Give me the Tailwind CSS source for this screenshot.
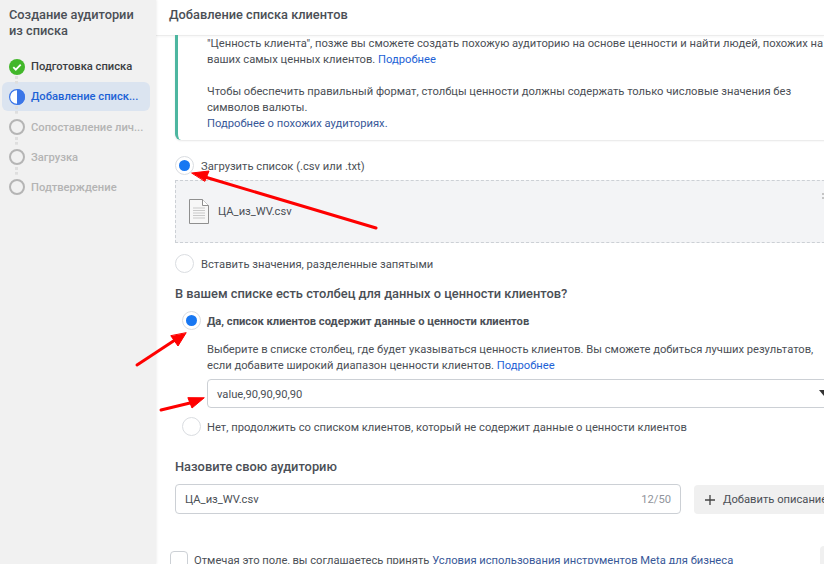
<!DOCTYPE html>
<html lang="ru">
<head>
  <meta charset="UTF-8">
  <meta name="viewport" content="width=device-width, initial-scale=1">
  <title>Создание аудитории из списка</title>
  <script src="https://cdn.jsdelivr.net/npm/@tailwindcss/browser@4"></script>
</head>
<body class="relative w-[824px] h-[564px] overflow-hidden bg-white text-[#4b4f56] font-['Roboto',sans-serif] text-[11.2px] leading-4">

  <div class="flex h-[564px]">
    <!-- Sidebar -->
    <aside class="w-[156px] shrink-0 h-full bg-[#f1f1f1] shadow-[1px_0_2px_rgba(0,0,0,0.06)] z-10">
      <h2 class="pl-[9px] pt-[7px] text-[12.8px] font-medium leading-4 text-[#4b4f56]">Создание аудитории<br>из списка</h2>
      <ul class="mt-[13px] relative">
        <li class="relative h-[30px] flex items-center pl-[9px] gap-[6px] font-medium text-[#3a3d42]">
          <svg class="w-4 h-4 shrink-0" viewBox="0 0 16 16"><circle cx="8" cy="8" r="8" fill="#42b72a"/><path d="M4.3 8.2l2.5 2.5 4.9-5" fill="none" stroke="#fff" stroke-width="1.8"/></svg>
          <span>Подготовка списка</span>
        </li>
        <li class="relative h-[29px] w-[148px] mx-[2px] flex items-center pl-[7px] gap-[6px] font-medium text-[#1d62d6] bg-[#dbe4f0] rounded-md">
          <svg class="w-4 h-4 shrink-0" viewBox="0 0 16 16"><circle cx="8" cy="8" r="7.4" fill="#fff" stroke="#3b76e8" stroke-width="1.2"/><path d="M8 0a8 8 0 0 1 0 16z" fill="#3b76e8"/></svg>
          <span>Добавление списк...</span>
        </li>
        <li class="h-[31px] flex items-center pl-[9px] gap-[6px] text-[#b4b4b4] font-medium">
          <span class="w-4 h-4 shrink-0 rounded-full border-2 border-[#b5b5b5]"></span>
          <span class="pt-[2px]">Сопоставление лич...</span>
        </li>
        <li class="h-[30px] flex items-center pl-[9px] gap-[6px] text-[#b4b4b4] font-medium">
          <span class="w-4 h-4 shrink-0 rounded-full border-2 border-[#b5b5b5]"></span>
          <span class="pt-[2px]">Загрузка</span>
        </li>
        <li class="h-[30px] flex items-center pl-[9px] gap-[6px] text-[#b4b4b4] font-medium">
          <span class="w-4 h-4 shrink-0 rounded-full border-2 border-[#b5b5b5]"></span>
          <span class="pt-[2px]">Подтверждение</span>
        </li>
        <!-- dotted connectors between the steps -->
        <span class="absolute left-[15px] top-[24px] w-[3px] h-[8px] border-l-[3px] border-dotted border-[#dedede]"></span>
        <span class="absolute left-[15px] top-[54px] w-[3px] h-[8px] border-l-[3px] border-dotted border-[#dedede]"></span>
        <span class="absolute left-[15px] top-[85px] w-[3px] h-[8px] border-l-[3px] border-dotted border-[#dedede]"></span>
        <span class="absolute left-[15px] top-[115px] w-[3px] h-[8px] border-l-[3px] border-dotted border-[#dedede]"></span>
      </ul>
    </aside>

    <!-- Main -->
    <main class="flex-1 min-w-0 overflow-hidden">
      <header class="h-[36px] pl-[13px] pt-[7px] text-[12.8px] font-medium leading-4 border-b border-[#ececec] shadow-[0_1px_2px_rgba(0,0,0,0.04)]">Добавление списка клиентов</header>

      <div class="w-[720px] pl-[19px]">
        <!-- Info card -->
        <div class="h-[105px] border-l-[3px] border-[#4db6a0] rounded-bl-md shadow-[0_1px_2px_rgba(0,0,0,0.1)] pl-[29px] pr-2 pt-px whitespace-nowrap -mt-px">
          "Ценность клиента", позже вы сможете создать похожую аудиторию на основе ценности и найти людей, похожих на<br>
          ваших самых ценных клиентов. <a class="text-[#1d62d6]">Подробнее</a><br>
          <br>
          Чтобы обеспечить правильный формат, столбцы ценности должны содержать только числовые значения без<br>
          символов валюты.<br>
          <a class="text-[#385898]">Подробнее о похожих аудиториях.</a>
        </div>

        <div class="flex items-center mt-[16px] h-[19px] gap-[7px]">
          <span class="w-[19px] h-[19px] rounded-full border border-[#dadde1] flex items-center justify-center shrink-0"><span class="w-[11px] h-[11px] rounded-full bg-[#1877f2]"></span></span>
          <span class="pt-[2px]">Загрузить список (.csv или .txt)</span>
        </div>

        <!-- Uploaded file -->
        <div class="relative mt-[5px] h-[63px] w-[680px] border border-dashed border-[#ccd0d5] bg-[#f3f4f6] flex items-center pl-[13px] gap-[9px]">
          <svg class="w-[20px] h-[25px] shrink-0 -mt-[1px]" viewBox="0 0 20 25">
            <path d="M.5.5h13l6 6v18H.5z" fill="#f7f7f7" stroke="#8f8f8f"/>
            <path d="M13.5.5v6h6" fill="#fff" stroke="#8f8f8f"/>
            <path d="M4 9h12M4 11.5h12M4 14h12M4 16.5h12M4 19h12" stroke="#c9c9c9"/>
          </svg>
          <span>ЦА_из_WV.csv</span>
          <span class="absolute left-[646px] top-[12px] w-[6px] h-[6px] border-y-2 border-[#c4c4c4]"></span>
        </div>

        <div class="flex items-center mt-[11px] h-[19px] gap-[7px]">
          <span class="w-[19px] h-[19px] rounded-full border border-[#dadde1] shrink-0"></span>
          <span class="pt-[2px]">Вставить значения, разделенные запятыми</span>
        </div>

        <h3 class="mt-[13px] text-[12.85px] font-medium">В вашем списке есть столбец для данных о ценности клиентов?</h3>

        <div class="pl-[7px]">
          <div class="flex items-center mt-[9px] h-[19px] gap-[6px]">
            <span class="w-[19px] h-[19px] rounded-full border border-[#dadde1] flex items-center justify-center shrink-0"><span class="w-[11px] h-[11px] rounded-full bg-[#1877f2]"></span></span>
            <span class="font-bold pt-[2px]">Да, список клиентов содержит данные о ценности клиентов</span>
          </div>
          <p class="mt-[12px] pl-[25px] whitespace-nowrap">Выберите в списке столбец, где будет указываться ценность клиентов. Вы сможете добиться лучших результатов,<br>если добавите широкий диапазон ценности клиентов. <a class="text-[#1d62d6]">Подробнее</a></p>
          <div class="relative mt-[5px] ml-[25px] w-[660px] h-[29px] border border-[#ccd0d5] rounded-[4px] flex items-center pl-[9px] pt-[2px]">
            value,90,90,90,90
            <span class="absolute left-[611px] top-[10px] w-0 h-0 border-x-[5px] border-x-transparent border-t-[6px] border-t-[#333]"></span>
          </div>
          <div class="flex items-center mt-[9px] h-[19px] gap-[6px]">
            <span class="w-[19px] h-[19px] rounded-full border border-[#dadde1] shrink-0"></span>
            <span class="pt-[2px]">Нет, продолжить со списком клиентов, который не содержит данные о ценности клиентов</span>
          </div>
        </div>

        <h3 class="mt-[23px] text-[12.85px] font-medium">Назовите свою аудиторию</h3>
        <div class="flex mt-[9px] gap-[13px]">
          <div class="w-[506px] h-[30px] border border-[#ccd0d5] rounded-[4px] flex items-center justify-between px-[9px] pt-[2px]">
            <span>ЦА_из_WV.csv</span>
            <span class="text-[#90949c]">12/50</span>
          </div>
          <div class="w-[150px] h-[29px] bg-[#f0f0f0] rounded-[4px] flex items-center pl-[11px] gap-[8px] mt-px">
            <svg class="w-[10px] h-[10px]" viewBox="0 0 10 10"><path d="M5 0v10M0 5h10" stroke="#444" stroke-width="1.3"/></svg>
            <span>Добавить описание</span>
          </div>
        </div>

        <div class="flex items-start mt-[37px] -ml-[5px] gap-[6px]">
          <span class="w-[18px] h-[18px] rounded-[4px] border border-[#ccd0d5] shrink-0"></span>
          <span class="mt-[2px] whitespace-nowrap">Отмечая это поле, вы соглашаетесь принять <a class="text-[#385898]">Условия использования инструментов Meta для бизнеса</a></span>
        </div>
      </div>
    </main>
  </div>

  <!-- Edge of a button cut off by the bottom right corner -->
  <span class="absolute left-[820px] top-[546px] w-[20px] h-[30px] bg-[#f0f0f0] rounded-[4px]"></span>

  <!-- Annotation arrows drawn over the screenshot -->
  <svg class="absolute inset-0 w-[824px] h-[564px] pointer-events-none z-20" viewBox="0 0 824 564">
    <g fill="#fe0000" stroke="#fe0000" stroke-linecap="round">
      <path d="M376 228L205 177" stroke-width="3" fill="none"/>
      <path d="M192 173L209 171L205 181z"/>
      <path d="M137 365L175 340" stroke-width="3" fill="none"/>
      <path d="M186 333L178 346L171 336z"/>
      <path d="M161 410L190 403" stroke-width="3" fill="none"/>
      <path d="M204 398L192 408L188 398z"/>
    </g>
  </svg>

</body>
</html>
